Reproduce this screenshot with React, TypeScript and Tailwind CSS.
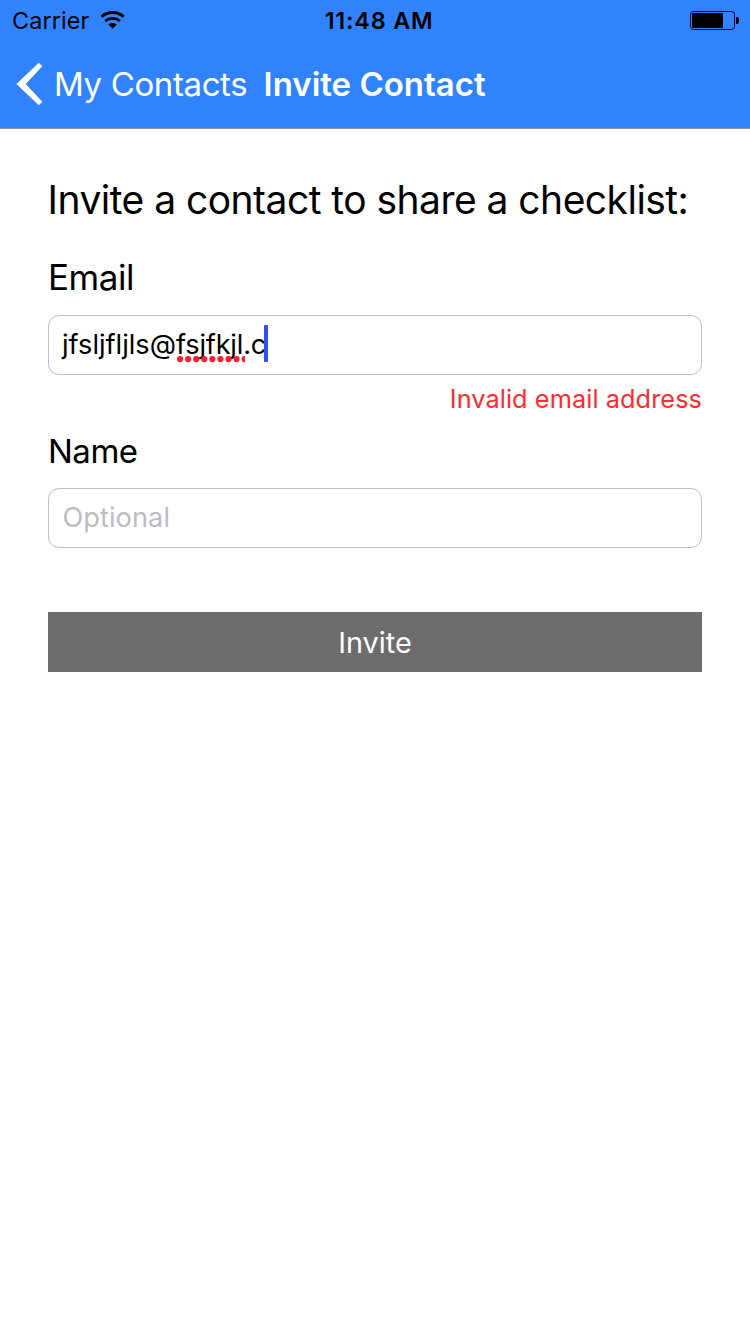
import React from 'react';

function WifiIcon() {
  return (
    <svg className="-mt-[2px] ml-[11px] h-[18px] w-[26px]" viewBox="0 0 26 18" fill="none">
      <path d="M1.500 5.700C4.700 2.800 8.700 1.500 12.600 1.500s7.900 1.300 11.100 4.200" stroke="#000" strokeWidth="2.900" />
      <path d="M5.200 10c2.200-1.900 4.700-2.700 7.400-2.700s5.200.8 7.400 2.700" stroke="#000" strokeWidth="2.800" />
      <path d="M8.500 13.400c2.400-2 5.800-2 8.200 0L12.600 17.800z" fill="#000" />
    </svg>
  );
}

function BatteryIcon() {
  return (
    <svg className="-mt-[1px] h-[20px] w-[50px]" viewBox="0 0 50 20" fill="none">
      <rect x="0.5" y="1.5" width="44" height="18" rx="3" stroke="#000" />
      <rect x="2" y="3" width="31" height="15" rx="1.2" fill="#000" />
      <path d="M46 7h1c1.300 0 2 1 2 3.500s-.7 3.500-2 3.500h-1z" fill="#000" />
    </svg>
  );
}

function StatusBar() {
  return (
    <div className="grid h-[41px] grid-cols-[1fr_auto_1fr] items-center text-[23.4px] leading-[41px] text-black">
      <div className="flex items-center pl-[12px]">
        <span className="tracking-[0.1px]">Carrier</span>
        <WifiIcon />
      </div>
      <span className="pl-[8px] font-semibold tracking-[0.8px]">11:48 AM</span>
      <div className="flex h-[41px] items-start justify-end pr-[10px] pt-[11px]">
        <BatteryIcon />
      </div>
    </div>
  );
}

function NavBar() {
  return (
    <div className="flex h-[87px] items-center pl-[16px] text-[33px] leading-[87px] text-white">
      <svg className="-mt-[2px] h-[44px] w-[27px]" viewBox="0 0 27 44" fill="#fff">
        <path d="M22.800 .7 26.300 4.300 9.700 22l16.600 17.700-3.500 3.600L.4 22z" />
      </svg>
      <span className="ml-[11px] w-[194px] whitespace-nowrap tracking-[-0.380px]">My Contacts</span>
      <span className="ml-[15.5px] whitespace-nowrap font-semibold">Invite Contact</span>
    </div>
  );
}

export default function App() {
  return (
    <div className="flex min-h-[1334px] w-[750px] flex-col bg-white font-[Inter,sans-serif] text-black">
      <header className="border-b border-[#929292] bg-[#3083fd]">
        <StatusBar />
        <NavBar />
      </header>
      <main className="flex flex-col px-[48px] pt-[46px]">
        <h1 className="-ml-[0.5px] h-[50px] whitespace-nowrap text-[39px] leading-[50px] tracking-[-0.530px]">
          Invite a contact to share a checklist:
        </h1>
        <label className="mt-[30px] h-[44px] text-[35px] leading-[44px] tracking-[-0.450px]">Email</label>
        <div className="mt-[16px] flex h-[60px] rounded-[11px] border border-[#bfbfbf] pl-[13px] text-[27.2px] leading-[57px]">
          <div className="flex h-[58px] whitespace-nowrap">
            <span>jfsljfljls@</span>
            <span className="relative tracking-[-0.200px]">
              fsjfkjl
              <svg className="absolute left-[1px] top-[40px] h-[7px] w-[68px]" viewBox="0 0 68 7" fill="#fb1f2b">
                {[0, 1, 2, 3, 4, 5, 6, 7, 8].map((i) => (
                  <circle key={i} cx={3.1 + i * 8.07} cy="3.1" r="3.1" />
                ))}
              </svg>
            </span>
            <span className="tracking-[-0.200px]">.c</span>
            <span className="relative -ml-[2px] mt-[9px] h-[37px] w-[4px] rounded-[1px] bg-[#324ff0]" />
          </div>
        </div>
        <p className="mt-[8px] h-[32px] whitespace-nowrap text-right text-[25.3px] leading-[32px] tracking-[0.070px] text-[#fc2d2f]">
          Invalid email address
        </p>
        <label className="mt-[15px] h-[42px] text-[33px] leading-[42px] tracking-[-0.500px]">Name</label>
        <div className="mt-[16px] flex h-[60px] rounded-[11px] border border-[#bfbfbf] pl-[13.5px] text-[27.2px] leading-[57px] tracking-[0.050px] text-[#bcbcc2]">
          <span className="h-[58px]">Optional</span>
        </div>
        <button className="mt-[64px] h-[60px] bg-[#6d6d6d] text-[28.8px] leading-[60px] text-white">
          <span className="block pt-[1px]">Invite</span>
        </button>
      </main>
    </div>
  );
}
